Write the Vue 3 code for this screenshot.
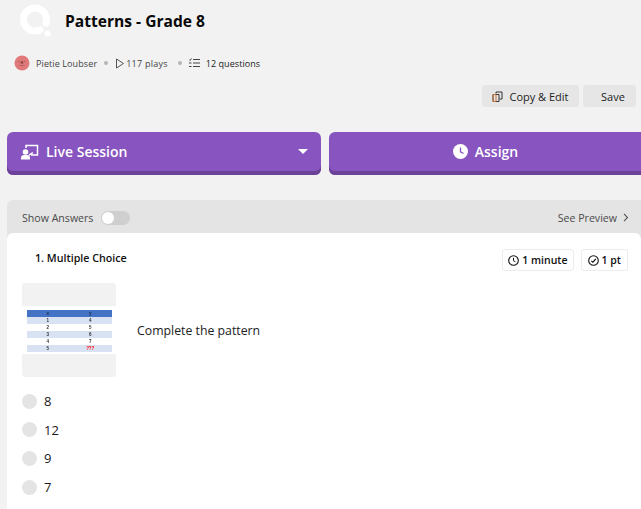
<script setup>
const options = ['8', '12', '9', '7']
const rows = [
  ['1', '4'],
  ['2', '5'],
  ['3', '6'],
  ['4', '7'],
  ['5', '???'],
]
</script>

<template>
  <div class="page">
    <header class="head">
      <svg class="logo" width="34" height="34" viewBox="0 0 34 34">
        <path d="M20.900 26.900A11.500 11.500 0 1 1 26.900 20.100" fill="none" stroke="#fff" stroke-width="7" stroke-linecap="round" />
        <circle cx="28.700" cy="30.500" r="3" fill="#fff" />
      </svg>
      <h1 class="title">Patterns - Grade 8</h1>
    </header>

    <div class="meta">
      <svg class="avatar" width="16" height="16" viewBox="0 0 16 16">
        <circle cx="8" cy="8" r="7.500" fill="#e07a7a" />
        <circle cx="8" cy="7.500" r="1.400" fill="#9a4a4a" />
        <path d="M4.500 6.500h1.500M10 6.500h1.500M5.500 10.500h5" stroke="#a85454" stroke-width="0.800" />
      </svg>
      <span class="author">Pietie Loubser</span>
      <span class="dot"></span>
      <svg class="play" width="10" height="11" viewBox="0 0 10 11">
        <path d="M1.500 1v9l7-4.500z" fill="none" stroke="#555" stroke-width="1" stroke-linejoin="round" />
      </svg>
      <span class="plays">117 plays</span>
      <span class="dot dot-two"></span>
      <svg class="list" width="11" height="10" viewBox="0 0 11 10">
        <path d="M4 1.500h7M4 5h7M4 8.500h7M0 1.500l1 1 1.500-2M0 5h2.500M0 8.500h2.500" fill="none" stroke="#444" stroke-width="1" />
      </svg>
      <span class="questions">12 questions</span>
    </div>

    <div class="actions">
      <button class="ghost copy">
        <svg width="11" height="11" viewBox="0 0 11 11">
          <path d="M4 2.500V1h6v7H7.500M1 3.500h6v7H1z" fill="none" stroke="#333" stroke-width="1" />
          <path d="M1 3.500h3v7H1z" fill="none" stroke="#c0703a" stroke-width="1" />
        </svg>
        Copy &amp; Edit
      </button>
      <button class="ghost save">Save</button>
    </div>

    <div class="cta-row">
      <button class="cta live">
        <svg width="18" height="16" viewBox="0 0 18 16">
          <path d="M5 4V1.500h11.500v9.500H10" fill="none" stroke="#fff" stroke-width="1.500" />
          <circle cx="4.500" cy="8" r="2.800" fill="#fff" />
          <path d="M0 15.500v-1.500a3 3 0 0 1 3-3h3a3 3 0 0 1 3 3v1.500zM7.500 10.500l4-2.500 .8 1.200-4 2.500z" fill="#fff" />
        </svg>
        <span class="cta-label">Live Session</span>
        <span class="caret"></span>
      </button>
      <button class="cta assign">
        <svg width="15" height="15" viewBox="0 0 15 15">
          <circle cx="7.500" cy="7.500" r="7.500" fill="#fff" />
          <path d="M7.500 3.500v4.300l3 1.700" fill="none" stroke="#8854c0" stroke-width="1.300" />
        </svg>
        <span class="cta-label">Assign</span>
      </button>
    </div>

    <section class="panel">
      <div class="panel-bar">
        <div class="show">
          <span>Show Answers</span>
          <span class="toggle"><span class="knob"></span></span>
        </div>
        <div class="preview">
          <span>See Preview</span>
          <svg width="6" height="9" viewBox="0 0 6 9">
            <path d="M1 .8l3.500 3.700L1 8.200" fill="none" stroke="#555" stroke-width="1.100" />
          </svg>
        </div>
      </div>

      <div class="card">
        <div class="q-head">
          <span class="q-type">1. Multiple Choice</span>
          <div class="chips">
            <span class="chip">
              <svg width="11" height="11" viewBox="0 0 11 11">
                <circle cx="5.500" cy="5.500" r="4.800" fill="none" stroke="#111" stroke-width="1.100" />
                <path d="M5.500 2.800v2.900l1.900 1.100" fill="none" stroke="#111" stroke-width="1" />
              </svg>
              1 minute
            </span>
            <span class="chip chip-pt">
              <svg width="11" height="11" viewBox="0 0 11 11">
                <circle cx="5.500" cy="5.500" r="4.800" fill="none" stroke="#111" stroke-width="1.100" />
                <path d="M3.300 5.800l1.500 1.400 3-3.200" fill="none" stroke="#111" stroke-width="1.100" />
              </svg>
              1 pt
            </span>
          </div>
        </div>

        <div class="q-body">
          <div class="thumb">
            <div class="sheet">
              <div class="tr tr-head"><span>x</span><span>y</span></div>
              <div v-for="(r, i) in rows" :key="r[0]" class="tr" :class="{ shade: i % 2 === 0 }">
                <span>{{ r[0] }}</span>
                <span :class="{ red: r[1] === '???' }">{{ r[1] }}</span>
              </div>
            </div>
          </div>
          <p class="q-text">Complete the pattern</p>
        </div>

        <ul class="options">
          <li v-for="o in options" :key="o" class="option">
            <span class="radio"></span>
            <span>{{ o }}</span>
          </li>
        </ul>
      </div>
    </section>
  </div>
</template>

<style>
html, body {
  margin: 0;
  background: #f2f2f2;
  overflow: hidden;
}
</style>

<style scoped>
.page {
  width: 641px;
  height: 509px;
  overflow: hidden;
  font-family: "Open Sans", sans-serif;
  color: #111;
  background: #f2f2f2;
}
.head {
  display: flex;
  align-items: center;
  height: 42px;
  padding-left: 19px;
}
.logo { flex: none; margin-top: -3px; }
.title {
  margin: 0 0 0 12px;
  font-size: 15.600px;
  font-weight: 700;
  color: #090909;
}
.meta {
  display: flex;
  align-items: center;
  height: 16px;
  margin-top: 13px;
  padding-left: 14px;
  font-size: 9px;
  color: #424242;
  white-space: nowrap;
}
.author { margin-left: 6px; letter-spacing: 0.1px; }
.dot {
  width: 4px;
  height: 4px;
  border-radius: 50%;
  background: #b5b5b5;
  margin: 0 7px 0 7px;
}
.play { margin-right: 1px; }
.plays { letter-spacing: 0.25px; }
.dot-two { margin: 0 7px 0 10px; }
.questions { margin-left: 6px; color: #222; letter-spacing: 0.05px; }
.actions {
  display: flex;
  justify-content: flex-end;
  gap: 4px;
  margin-top: 14px;
  padding-right: 5px;
}
.ghost {
  display: flex;
  align-items: center;
  justify-content: center;
  height: 22px;
  padding: 0;
  border: 0;
  border-radius: 3px;
  background: #e6e6e6;
  font-family: inherit;
  font-size: 11px;
  font-weight: 500;
  color: #222;
}
.copy { width: 97px; gap: 6px; }
.save { width: 53px; padding-left: 7px; }
.cta-row {
  display: flex;
  gap: 8px;
  margin-top: 25px;
  padding-left: 7px;
  width: 644px;
}
.cta {
  display: flex;
  align-items: center;
  height: 43px;
  padding: 0 0 4px;
  border: 0;
  border-radius: 6px;
  background: #8854c0;
  box-shadow: inset 0 -4px 0 #6c4298;
  font-family: inherit;
  color: #fff;
}
.cta-label {
  font-size: 14px;
  font-weight: 600;
}
.live {
  width: 314px;
  flex: none;
  padding-left: 14px;
}
.live .cta-label { margin-left: 7px; }
.caret {
  margin-left: auto;
  margin-right: 13px;
  border-left: 5px solid transparent;
  border-right: 5px solid transparent;
  border-top: 5px solid #fff;
}
.assign {
  flex: 1;
  justify-content: center;
  padding-right: 9px;
  gap: 7px;
}
.panel {
  margin: 25px 0 0 7px;
  border-radius: 6px 0 0 0;
  background: #e4e4e4;
}
.panel-bar {
  display: flex;
  align-items: center;
  justify-content: space-between;
  height: 33px;
  padding: 2px 12px 0 15px;
  box-sizing: border-box;
  font-size: 10.600px;
  color: #4a4a4a;
}
.show, .preview { display: flex; align-items: center; }
.preview { gap: 6px; }
.toggle {
  display: flex;
  align-items: center;
  width: 29px;
  height: 14px;
  margin-left: 7.500px;
  border-radius: 7px;
  background: #cfcfcf;
}
.knob {
  width: 12px;
  height: 12px;
  margin-left: 1px;
  border-radius: 50%;
  background: #fff;
}
.card {
  height: 280px;
  border-radius: 6px 6px 0 0;
  background: #fff;
}
.q-head {
  display: flex;
  align-items: flex-start;
  justify-content: space-between;
  padding: 16px 13px 0 28px;
}
.q-type {
  font-size: 10.700px;
  font-weight: 600;
  line-height: 18px;
  color: #111;
}
.chips { display: flex; gap: 7px; }
.chip {
  display: flex;
  align-items: center;
  gap: 3px;
  height: 20px;
  padding: 0 5px;
  border: 1px solid #ececec;
  border-radius: 3px;
  font-size: 10.500px;
  font-weight: 600;
  color: #111;
}
.chip-pt { padding: 0 6px; }
.q-body {
  display: flex;
  align-items: center;
  margin-top: 12px;
  padding-left: 15px;
}
.thumb {
  display: flex;
  flex-direction: column;
  justify-content: center;
  align-items: center;
  width: 94px;
  height: 94px;
  border-radius: 3px;
  background: linear-gradient(#f2f2f2 23px, #fff 23px, #fff 71px, #f2f2f2 71px);
}
.sheet {
  width: 85px;
  height: 41px;
  display: flex;
  flex-direction: column;
  background: #fff;
  filter: blur(0.3px);
}
.tr {
  display: grid;
  grid-template-columns: 1fr 1fr;
  flex: 1;
  font-family: "Liberation Sans", sans-serif;
  font-size: 4.500px;
  font-weight: 700;
  line-height: 7px;
  text-align: center;
  color: #333;
}
.tr-head { background: #4472c4; color: #1c2d50; }
.shade { background: #d9e2f3; }
.red { color: #f00; }
.q-text {
  margin: 0 0 0 21px;
  font-size: 12.300px;
  color: #222;
}
.options {
  list-style: none;
  margin: 10px 0 0;
  padding: 0 0 0 15px;
}
.option {
  display: flex;
  align-items: center;
  gap: 7px;
  height: 28.600px;
  font-size: 13px;
  color: #1a1a1a;
}
.radio {
  width: 15px;
  height: 15px;
  border-radius: 50%;
  background: #e4e4e4;
}
</style>
